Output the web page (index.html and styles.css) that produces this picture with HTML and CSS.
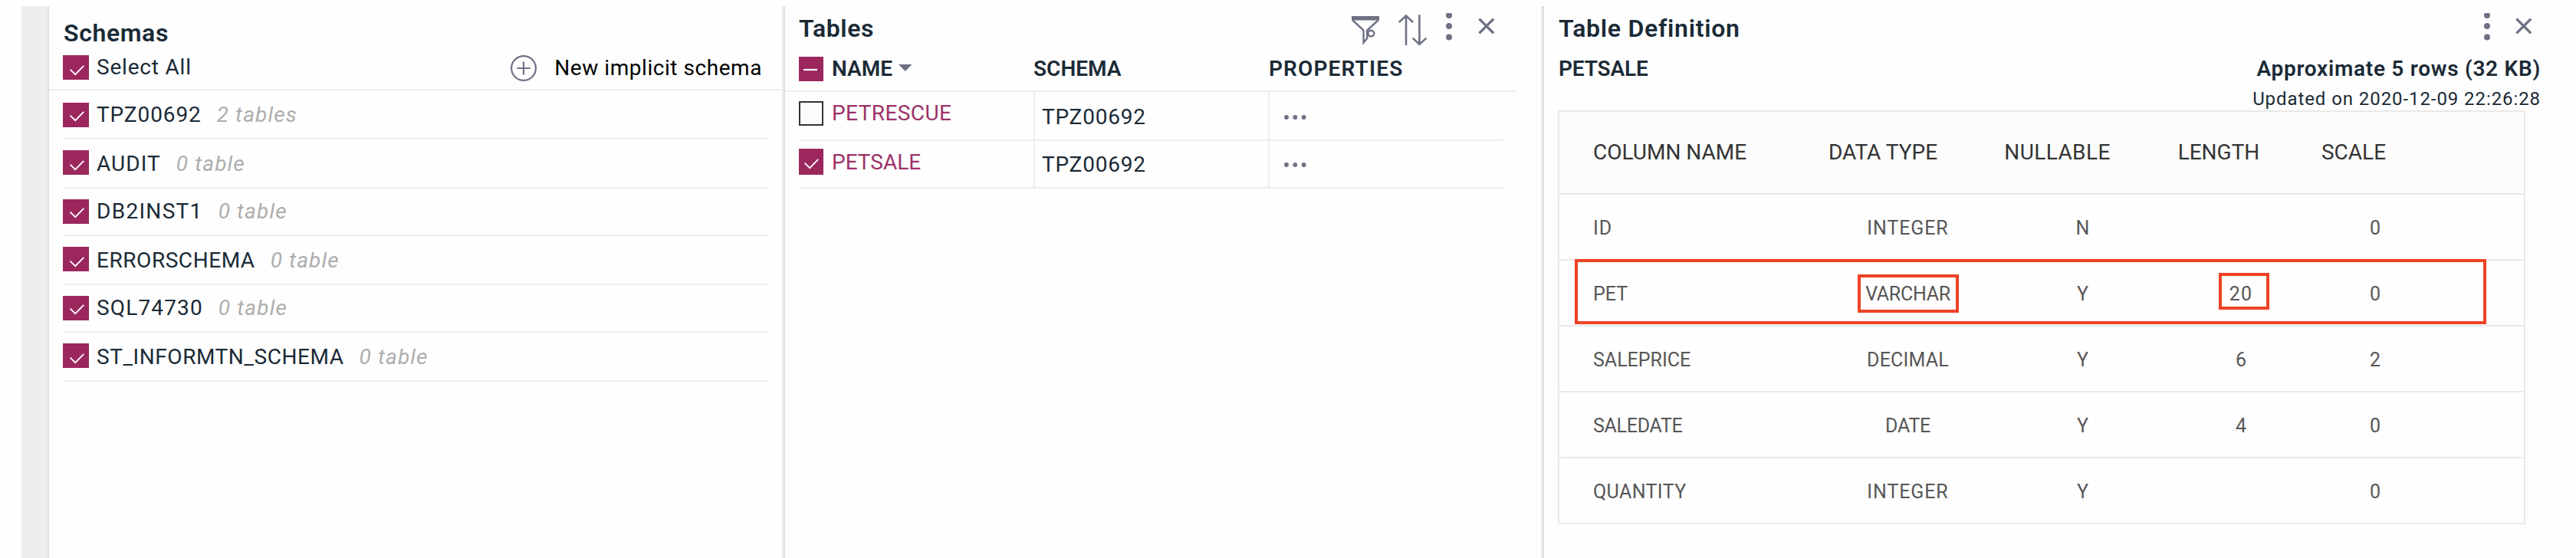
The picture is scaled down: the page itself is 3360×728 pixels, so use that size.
FILE: index.html
```html
<!DOCTYPE html>
<html lang="en">
<head>
<meta charset="utf-8">
<title>Schemas and tables</title>
<link rel="stylesheet" href="styles.css">
</head>
<body>
<svg class="defs" aria-hidden="true">
  <symbol id="check" viewBox="0 0 34 32"><path d="M9.6 16.6 16.2 23.2 27.3 11.8" fill="none" stroke="#fff" stroke-width="1.8"/></symbol>
  <symbol id="kebab" viewBox="0 0 8 40"><circle cx="4" cy="3" r="4"/><circle cx="4" cy="17" r="4"/><circle cx="4" cy="31.4" r="4"/></symbol>
  <symbol id="close" viewBox="0 0 22 40"><path d="M1.4 7.6 20.2 26.4M20.2 7.6 1.4 26.4" fill="none" stroke="#6f7285" stroke-width="3.4"/></symbol>
  <symbol id="dots" viewBox="0 0 30 8"><circle cx="4" cy="4" r="2.9"/><circle cx="15.3" cy="4" r="2.9"/><circle cx="26.6" cy="4" r="2.9"/></symbol>
</svg>
<main class="app">
  <div class="rail"></div>

  <section class="panel schemas">
    <h2 class="title t6">Schemas</h2>
    <div class="select-all">
      <span class="box box--wide box--low"><svg><use href="#check"/></svg></span>
      <span class="label t8">Select All</span>
      <button class="new-schema">
        <svg viewBox="0 0 36 36"><circle cx="18" cy="18" r="15.9"/><path d="M9.4 18h17.2M18 9.5v17"/></svg>
        <span class="t5">New implicit schema</span>
      </button>
    </div>
    <ul class="schema-list">
      <li class="first"><span class="box box--wide"><svg><use href="#check"/></svg></span><span class="label t9">TPZ00692</span><em>2 tables</em></li>
      <li class="low"><span class="box box--wide box--low"><svg><use href="#check"/></svg></span><span class="label t10">AUDIT</span><em>0 table</em></li>
      <li class="short"><span class="box box--wide"><svg><use href="#check"/></svg></span><span class="label t13">DB2INST1</span><em>0 table</em></li>
      <li class="low"><span class="box box--wide box--low"><svg><use href="#check"/></svg></span><span class="label t5">ERRORSCHEMA</span><em>0 table</em></li>
      <li class="short"><span class="box box--wide"><svg><use href="#check"/></svg></span><span class="label t11">SQL74730</span><em>0 table</em></li>
      <li class="low"><span class="box box--wide box--low"><svg><use href="#check"/></svg></span><span class="label t5">ST_INFORMTN_SCHEMA</span><em>0 table</em></li>
    </ul>
  </section>

  <div class="divider"></div>

  <section class="panel tables">
    <header class="panel-head">
      <h2 class="title t5">Tables</h2>
      <div class="tools">
        <svg class="filter" viewBox="0 0 36 44"><path class="solid" d="M0 4h36v5.4H0z"/><path d="M1 9 15.5 22.6V38.6L20.2 33V22.6L35 9"/><circle cx="25.3" cy="26.6" r="3.9"/></svg>
        <svg class="sort" viewBox="0 0 38 44"><path d="M10 3.5V42M.8 12 10 3.5 19 12M27.4 2.2V40.8M18.6 32.6l8.8 8.2 9.2-8.2"/></svg>
        <svg class="kebab"><use href="#kebab"/></svg>
        <svg class="close"><use href="#close"/></svg>
      </div>
    </header>
    <div class="cols cols--head">
      <span class="name-cell"><span class="box"><svg viewBox="0 0 32 32"><path d="M6 17h18" stroke="#fff" stroke-width="2.2"/></svg></span><span class="bold">NAME</span><svg class="caret" viewBox="0 0 18 9"><path d="M0 0h17.6L8.8 9z"/></svg></span>
      <span class="bold">SCHEMA</span>
      <span class="bold t11">PROPERTIES</span>
    </div>
    <div class="table-list">
      <div class="cols cols--row">
        <span class="name-cell link t4"><span class="box box--empty"></span>PETRESCUE</span>
        <span class="cell t8">TPZ00692</span>
        <span class="cell cell--dots"><svg class="dots"><use href="#dots"/></svg></span>
      </div>
      <div class="cols cols--row cols--second">
        <span class="name-cell link"><span class="box box--tall"><svg><use href="#check"/></svg></span>PETSALE</span>
        <span class="cell t8">TPZ00692</span>
        <span class="cell cell--dots"><svg class="dots"><use href="#dots"/></svg></span>
      </div>
    </div>
  </section>

  <div class="divider"></div>

  <section class="panel definition">
    <header class="panel-head">
      <h2 class="title t7">Table Definition</h2>
      <div class="tools">
        <svg class="kebab"><use href="#kebab"/></svg>
        <svg class="close"><use href="#close"/></svg>
      </div>
    </header>
    <div class="summary">
      <span class="bold petsale">PETSALE</span>
      <div class="stats">
        <div class="bold t7">Approximate 5 rows (32 KB)</div>
        <div class="updated">Updated on 2020-12-09 22:26:28</div>
      </div>
    </div>
    <div class="grid">
      <div class="tr th"><span>COLUMN NAME</span><span>DATA TYPE</span><span class="t4">NULLABLE</span><span>LENGTH</span><span>SCALE</span></div>
      <div class="tr"><span class="t10">ID</span><span class="t9">INTEGER</span><span>N</span><span></span><span>0</span></div>
      <div class="tr marked"><span>PET</span><span class="mark-type tn3">VARCHAR</span><span>Y</span><span class="mark-len t11">20</span><span>0</span></div>
      <div class="tr"><span>SALEPRICE</span><span class="t2">DECIMAL</span><span>Y</span><span>6</span><span>2</span></div>
      <div class="tr"><span class="tn3">SALEDATE</span><span class="tn3">DATE</span><span>Y</span><span>4</span><span>0</span></div>
      <div class="tr"><span class="t4">QUANTITY</span><span class="t9">INTEGER</span><span>Y</span><span></span><span>0</span></div>
    </div>
  </section>
</main>
</body>
</html>
```
FILE: styles.css
```css
*, *::after { box-sizing: border-box; }
body { margin: 0; background: #fefefe; color: #1a2a36; font: 400 28px/32px Roboto, sans-serif; overflow: hidden; }
svg { display: block; flex: none; }
.defs { position: absolute; width: 0; height: 0; }
.app { display: flex; height: 728px; padding: 8px 0 0 28px; white-space: nowrap; }
.rail { flex: none; width: 36px; background: #eeeef0; border-right: 2px solid #e0e0e0; }
.divider { flex: none; width: 4px; background: #e0e0e0; border-left: 2px solid #ededed; }
.title { margin: 0; font-size: 32px; line-height: 40px; font-weight: 600; }
.bold { font-weight: 600; }

/* Letter tracking, in tenths of a pixel */
.tn3 { letter-spacing: -.3px; }
.t2 { letter-spacing: .2px; }
.t4 { letter-spacing: .4px; }
.t5 { letter-spacing: .55px; }
.t6 { letter-spacing: .6px; }
.t7 { letter-spacing: .72px; }
.t8 { letter-spacing: .8px; }
.t9 { letter-spacing: .9px; }
.t10 { letter-spacing: 1.05px; }
.t11 { letter-spacing: 1.15px; }
.t13 { letter-spacing: 1.3px; }

/* Checkboxes */
.box { flex: none; display: block; width: 32px; height: 32px; background: #9b275d; overflow: hidden; }
.box svg { width: 32px; height: 32px; }
.box--wide, .box--wide svg { width: 34px; }
.box--low { padding-top: 2px; }
.box--tall { height: 34px; padding-top: 2px; }
.box--tall svg { width: 34px; margin-left: -2px; }
.box--empty { background: #fcfcfc; border: 2px solid #333; }

/* Schemas */
.schemas { width: 956px; padding-top: 15px; }
.schemas .title { padding-left: 19px; }
.select-all { display: flex; height: 55px; padding: 9px 0 0 18px; border-bottom: 2px solid #eee; }
.label { margin-left: 10px; }
.new-schema { display: flex; align-items: center; gap: 22px; height: 34px; margin: 0 26px 0 auto; padding: 0; border: 0; background: none; color: #000; font: inherit; letter-spacing: inherit; }
.new-schema svg { width: 36px; height: 36px; fill: none; stroke: #6f7285; stroke-width: 2.2; }
.schema-list { list-style: none; margin: 0; padding: 0 18px; }
.schema-list li { display: flex; height: 64px; padding-top: 14px; border-bottom: 2px solid #eee; }
.schema-list .first { padding-top: 16px; }
.schema-list .short { height: 62px; }
.schema-list .low { line-height: 36px; }
.schema-list em { margin-left: 20px; color: #adadad; letter-spacing: 1.15px; }

/* Tables */
.panel-head { display: flex; justify-content: space-between; height: 49px; padding-top: 9px; }
.tools { display: flex; fill: #6f7285; }
.tools svg { height: 40px; }
.tools .filter { width: 36px; height: 44px; margin-right: 25px; fill: none; stroke: #6f7285; stroke-width: 2.4; }
.filter .solid { fill: #6f7285; stroke: none; }
.tools .sort { width: 38px; height: 44px; margin-right: 24px; fill: none; stroke: #6f7285; stroke-width: 2.6; }
.kebab { width: 8px; margin-right: 34px; overflow: visible; }
.close { width: 22px; }
.tables { width: 986px; }
.tables .panel-head { padding-left: 18px; padding-right: 60px; }
.cols { display: grid; grid-template-columns: 306px 306px 306px; }
.cols--head { grid-template-columns: 306px 307px 305px; width: 954px; height: 63px; padding: 17px 0 0 18px; border-bottom: 2px solid #eee; }
.name-cell { display: flex; gap: 11px; }
.caret { width: 18px; height: 9px; margin: 10px 0 0 -3px; fill: #6f7285; }
.table-list { padding: 0 50px 0 18px; }
.cols--row { height: 64px; border-bottom: 2px solid #eee; }
.link { color: #9d3269; padding-top: 12px; }
.cell { border-left: 2px solid #eee; padding: 16px 0 0 9px; line-height: 33px; }
.cell--dots { padding-left: 18px; }
.cols--second { height: 62px; }
.cols--second .link { padding-top: 10px; line-height: 36px; }
.cols--second .cell { padding-top: 14px; }
.dots { width: 30px; height: 8px; margin-top: 12.5px; fill: #6f7285; }

/* Table definition */
.definition { flex: 1; padding-left: 18px; }
.definition .panel-head { padding-right: 57px; padding-left: 1px; }
.definition .kebab { margin-right: 33px; }
.summary { display: flex; justify-content: space-between; height: 87px; padding: 17px 46px 0 1px; }
.petsale { letter-spacing: -.16px; }
.stats { text-align: right; }
.updated { margin-top: 8px; font-size: 24px; line-height: 31px; letter-spacing: .92px; }
.grid { width: 1262px; border: 2px solid #e9e9e9; border-bottom: 0; }
.tr { position: relative; display: grid; grid-template-columns: 340px 229px 227px 186px 164px; height: 86px; border-bottom: 2px solid #e9e9e9; color: #565656; font-size: 25px; line-height: 87px; text-align: center; }
.tr span:first-child { padding-left: 44px; text-align: left; }
.th { height: 108px; background: #fcfcfc; color: #333; font-size: 28px; line-height: 106px; }
.th span:nth-child(2) { padding-right: 65px; }
.th span:nth-child(3) { padding-right: 66px; }
.th span:nth-child(4) { padding-right: 58px; }
.th span:nth-child(5) { padding-right: 56px; }

/* Red annotation frames over the marked row */
.marked::after, .mark-type::after, .mark-len::after { content: ""; position: absolute; border: 4px solid #ee4225; }
.mark-type, .mark-len { position: relative; }
.marked::after { left: 20px; top: -2px; width: 1189px; height: 85px; }
.mark-type::after { left: 49px; top: 18px; width: 132px; height: 50px; }
.mark-len::after { left: 64px; top: 16px; width: 66px; height: 48px; }
```
